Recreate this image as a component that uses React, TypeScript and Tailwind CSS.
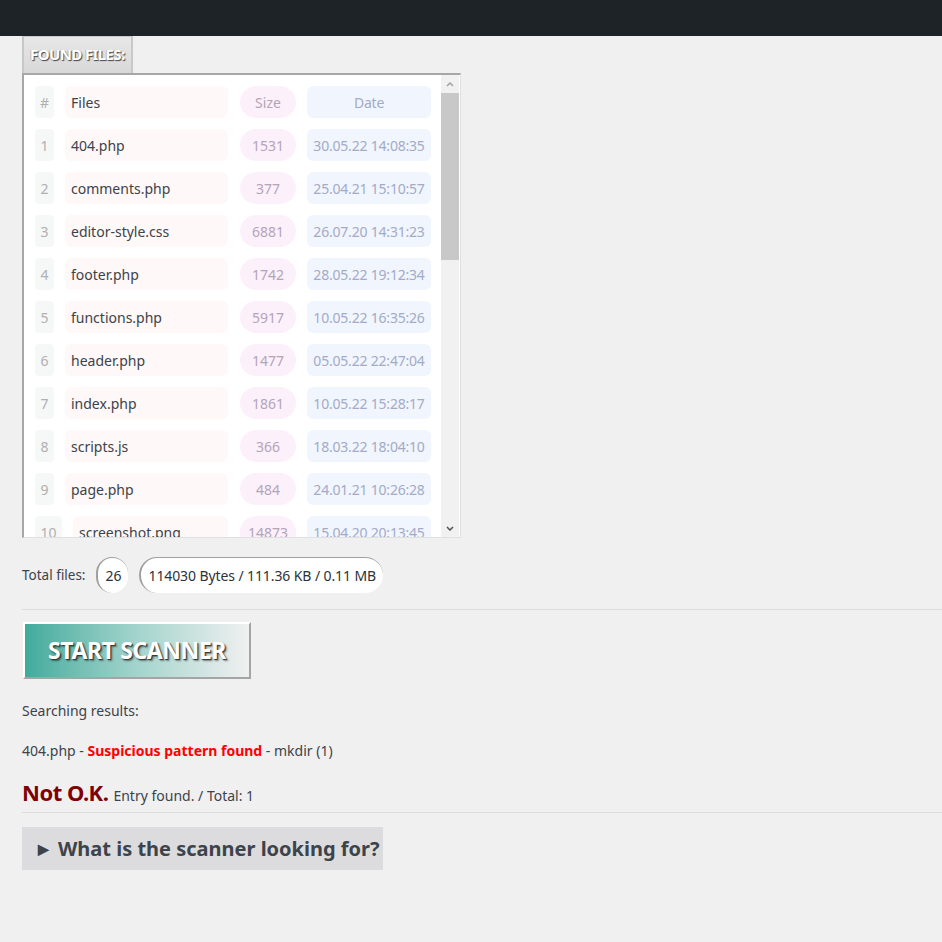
const files = [
  { n: 1, name: "404.php", size: 1531, date: "30.05.22 14:08:35" },
  { n: 2, name: "comments.php", size: 377, date: "25.04.21 15:10:57" },
  { n: 3, name: "editor-style.css", size: 6881, date: "26.07.20 14:31:23" },
  { n: 4, name: "footer.php", size: 1742, date: "28.05.22 19:12:34" },
  { n: 5, name: "functions.php", size: 5917, date: "10.05.22 16:35:26" },
  { n: 6, name: "header.php", size: 1477, date: "05.05.22 22:47:04" },
  { n: 7, name: "index.php", size: 1861, date: "10.05.22 15:28:17" },
  { n: 8, name: "scripts.js", size: 366, date: "18.03.22 18:04:10" },
  { n: 9, name: "page.php", size: 484, date: "24.01.21 10:26:28" },
  { n: 10, name: "screenshot.png", size: 14873, date: "15.04.20 20:13:45" },
]

function Row({ n, name, size, date }: { n: string; name: string; size: string; date: string }) {
  const wide = n.length > 1
  return (
    <div className="flex items-center h-[32px] mb-[11px] shrink-0">
      <div className={`${wide ? "w-[27px]" : "w-[19px]"} h-full rounded bg-[#f6f7f7] text-[#b0b0b0] flex items-center justify-center`}>{n}</div>
      <div className={`${wide ? "w-[155px]" : "w-[163px]"} ml-[11px] h-full rounded-md bg-[#fff8f8] text-[#3c434a] flex items-center px-1.5`}>{name}</div>
      <div className="ml-[12px] w-[56px] h-full rounded-full bg-[#fcf0fb] text-[#b4a4b8] flex items-center justify-center">{size}</div>
      <div className="ml-[11px] w-[124px] h-full rounded-md bg-[#f1f5fe] text-[#a3abc6] flex items-center justify-center tracking-[-0.2px]">{date}</div>
    </div>
  )
}

export default function App() {
  return (
    <div className="min-h-[942px] bg-[#f0f0f1] text-[#3c434a] text-[14px]" style={{ fontFamily: '"Noto Sans", "Open Sans", sans-serif' }}>
      <div className="h-[36px] bg-[#1d2327]" />
      <div className="pl-[22px]">
        <div className="inline-block w-[111px] h-[37px] border-l-2 border-t border-r-2 border-[#c8c8c8] bg-gradient-to-b from-[#e8e8e8] to-[#d8d8d8] pl-[6px] pt-[6px] text-[15px] font-bold text-white tracking-[-0.6px] [text-shadow:1px_1px_1px_#444,-1px_0_0_#bbb]">
          FOUND FILES:
        </div>
        <div className="w-[439px] h-[465px] border-t-2 border-l-2 border-[#a7a7a7] border-r border-b border-r-[#e0e0e0] border-b-[#e0e0e0] bg-white flex">
          <div className="flex-1 overflow-hidden pl-[11px] pt-[11px] flex flex-col">
            <Row n="#" name="Files" size="Size" date="Date" />
            {files.map((f) => (
              <Row key={f.n} n={String(f.n)} name={f.name} size={String(f.size)} date={f.date} />
            ))}
          </div>
          <div className="w-[18px] mr-[1px] bg-[#f1f1f1] flex flex-col">
            <div className="h-[18px] flex items-center justify-center">
              <svg width="8" height="5" viewBox="0 0 8 5"><path d="M1 4 L4 1 L7 4" stroke="#a3a3a3" strokeWidth="1.5" fill="none" /></svg>
            </div>
            <div className="h-[167px] bg-[#c8c8c8]" />
            <div className="flex-1" />
            <div className="h-[18px] flex items-center justify-center">
              <svg width="8" height="5" viewBox="0 0 8 5"><path d="M1 1 L4 4 L7 1" stroke="#505050" strokeWidth="1.5" fill="none" /></svg>
            </div>
          </div>
        </div>

        <div className="flex items-center mt-[19px] h-[36px]">
          <span className="text-[13.5px]">Total files:</span>
          <span className="ml-[11px] w-[32px] h-[36px] rounded-full bg-white border-l-2 border-t border-[#a0a0a0] flex items-center justify-center text-[#2c3338]">26</span>
          <span className="ml-[11px] h-[36px] px-[7px] rounded-full bg-white border-l-2 border-t border-[#a0a0a0] flex items-center text-[#2c3338] tracking-[-0.1px]">114030 Bytes / 111.36 KB / 0.11 MB</span>
        </div>
      </div>

      <div className="ml-[22px] mt-[16px] border-t border-[#dcdcde]" />

      <div className="pl-[23px] mt-[12px]">
        <button className="w-[228px] h-[57px] border-t-2 border-l-2 border-white border-r-2 border-b-2 border-r-[#a5a5a5] border-b-[#a5a5a5] bg-gradient-to-r from-[#3fab9d] via-[#a3d4cd] to-[#f0f0f0] text-white font-bold text-[23px] tracking-[-0.4px] [text-shadow:1px_1px_1px_#333,2px_2px_2px_rgba(0,0,0,0.4)]">
          START SCANNER
        </button>
      </div>

      <div className="pl-[22px]">
        <div className="mt-[21px] h-[20px] flex items-center">Searching results:</div>
        <div className="mt-[20px] h-[20px] flex items-center">
          404.php -&nbsp;<b className="text-[#f00] font-bold">Suspicious pattern found</b>&nbsp;- mkdir (1)
        </div>
        <div className="mt-[16px] flex items-baseline">
          <span className="text-[22px] font-bold text-[#800000] tracking-[-0.5px]">Not O.K.</span>
          <span className="ml-[5px]">Entry found. / Total: 1</span>
        </div>
      </div>
      <div className="ml-[22px] mt-[3px] border-t border-[#dcdcde]" />
      <div className="pl-[22px] mt-[14px]">
        <div className="w-[361px] h-[43px] bg-[#dcdcde] flex items-center pl-[16px] text-[20px] font-bold text-[#3c434a]">
          <span className="text-[14px] mr-[9px]">▶</span>What is the scanner looking for?
        </div>
      </div>
    </div>
  )
}
